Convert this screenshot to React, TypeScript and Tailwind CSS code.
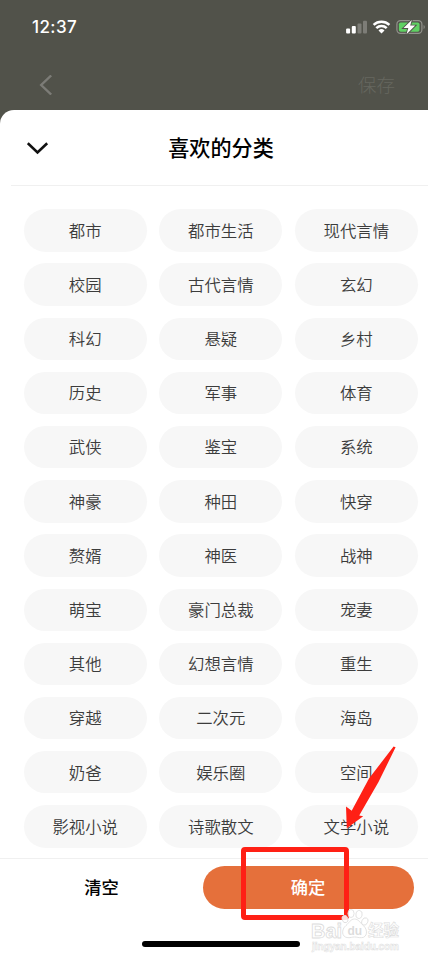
import { useState } from "react";

const categories = [
    "都市", "都市生活", "现代言情",
    "校园", "古代言情", "玄幻",
    "科幻", "悬疑", "乡村",
    "历史", "军事", "体育",
    "武侠", "鉴宝", "系统",
    "神豪", "种田", "快穿",
    "赘婿", "神医", "战神",
    "萌宝", "豪门总裁", "宠妻",
    "其他", "幻想言情", "重生",
    "穿越", "二次元", "海岛",
    "奶爸", "娱乐圈", "空间",
    "影视小说", "诗歌散文", "文学小说",
];

function StatusIcons() {
    return (
        <svg className="h-4 w-[80px]" viewBox="346 19 80 16" fill="none">
            {/* Signal */}
            <rect x="346.1" y="28.5" width="4" height="5" rx="1" fill="#fff" />
            <rect x="351.8" y="26" width="4" height="7.5" rx="1" fill="#fff" />
            <rect x="357.5" y="23.5" width="4" height="10" rx="1" fill="#7d7d77" />
            <rect x="363" y="20.8" width="4" height="12.7" rx="1" fill="#7d7d77" />
            {/* Wifi */}
            <path d="M373.6 24.8a11.6 11.6 0 0 1 15.8 0M376.3 28.2a7.4 7.4 0 0 1 10.4 0" stroke="#fff" strokeWidth="2.5" />
            <path d="M381.5 33.5l-3-3.1a4.3 4.3 0 0 1 6 0z" fill="#fff" />
            {/* Battery */}
            <rect x="396.9" y="20.6" width="25" height="12.8" rx="3.6" stroke="#92928c" strokeWidth="1.2" />
            <path d="M423.6 25v4.2c1.5-.6 1.5-3.6 0-4.2z" fill="#92928c" />
            <rect x="398.9" y="22.4" width="20.6" height="9.4" rx="1.8" fill="#5fd163" />
            <path d="M411.8 20l-8.3 8.1h4.8l-1.8 6.2 8.7-8.7h-5z" fill="#fff" stroke="#51524a" strokeWidth="1.8" paintOrder="stroke" />
        </svg>
    );
}

function Watermark() {
    return (
        <svg className="absolute left-[306px] top-[907px] h-[50px] w-[100px]" viewBox="306 907 100 50">
            <g fill="#fff" fillOpacity="0.85" stroke="#dcdcdc" strokeWidth="0.8">
                <text x="311" y="937.5" fontFamily="Liberation Sans, sans-serif" fontSize="20" fontWeight="700" textLength="31" lengthAdjust="spacingAndGlyphs">Bai</text>
                <ellipse cx="345" cy="919" rx="2.9" ry="3.8" transform="rotate(-18 345 919)" />
                <ellipse cx="351" cy="913.5" rx="3.1" ry="4" />
                <ellipse cx="359" cy="914.5" rx="3.1" ry="4" transform="rotate(12 359 914.5)" />
                <ellipse cx="364.8" cy="921.5" rx="2.9" ry="3.8" transform="rotate(25 364.8 921.5)" />
                <path d="M354.5 919c-4 0-5.5 4-8.5 6.5-5 4-4.5 12 2 12.2 3 .1 4-.7 6.5-.7s4 .8 7 .7c6-.2 6.5-8 2-12-3.5-3-5-6.700-9-6.700z" />
                <text x="347.5" y="935" fontFamily="Liberation Sans, sans-serif" fontSize="12" fontWeight="700" fill="#d6d6d6" stroke="none">du</text>
                <text x="368" y="936" fontFamily="'Noto Sans CJK SC', sans-serif" fontSize="15.5" fontWeight="700" strokeWidth="0.6" textLength="31">经验</text>
                <text x="312" y="949.5" fontFamily="Liberation Sans, sans-serif" fontSize="10" fontWeight="700" strokeWidth="0.5" textLength="87">jingyan.baidu.com</text>
            </g>
        </svg>
    );
}

export default function App() {
    const [selected, setSelected] = useState<string[]>([]);

    const toggleCategory = (name: string) => {
        setSelected(prev => prev.includes(name) ? prev.filter(c => c !== name) : [...prev, name]);
    };

    return (
        <div className="relative flex h-[963px] w-[428px] flex-col overflow-hidden bg-[#51524a] font-['Noto_Sans_CJK_SC',sans-serif]">
            <header className="h-[110px] shrink-0">
                <div className="flex h-[54px] items-center justify-between pl-8 pr-0.5">
                    <span className="pt-0.5 font-['Inter',sans-serif] text-[17px] font-medium tracking-[0.4px] text-white">12:37</span>
                    <StatusIcons />
                </div>
                <div className="flex h-[62px] items-center justify-between pl-[39px] pr-[33px]">
                    <svg className="h-5 w-3.5" viewBox="0 0 14 20" fill="none">
                        <path d="M12.2 .5L2.2 10l10 9.5" stroke="#7c7c77" strokeWidth="2.4" />
                    </svg>
                    <span className="pb-px text-[18.5px] font-light text-[#66675f]">保存</span>
                </div>
            </header>

            <main className="flex w-[442px] grow flex-col rounded-t-[14px] bg-white">
                <div className="ml-[11px] flex h-[76px] shrink-0 items-center border-b border-[#f0f0f0] pl-4">
                    <svg className="h-3.5 w-[22px]" viewBox="0 0 22 14" fill="none">
                        <path d="M.8 2.2l9.7 9.3 9.7-9.3" stroke="#111" strokeWidth="2.6" />
                    </svg>
                    <h1 className="grow pr-[49px] text-center text-[21.1px] font-medium text-black">喜欢的分类</h1>
                </div>

                <div className="grid h-[672px] shrink-0 auto-rows-[42.3px] grid-cols-3 gap-x-[12.3px] gap-y-[11.9px] pl-[23.6px] pr-[24px] pt-[23.3px]">
                    {categories.map(name => (
                        <button
                            key={name}
                            onClick={() => toggleCategory(name)}
                            className={`rounded-full pb-px text-[16.4px] font-[350] ${selected.includes(name)
                                ? "bg-[#fdeee6] text-[#e5703b]"
                                : "bg-[#f7f7f7] text-[#3c3c3c]"
                                }`}
                        >
                            {name}
                        </button>
                    ))}
                </div>

                <footer className="flex grow flex-col border-t border-[#f0f0f0] pt-[7px]">
                    <div className="flex">
                        <button onClick={() => setSelected([])} className="w-[203px] pb-px text-[17.3px] font-medium text-black">
                            清空
                        </button>
                        <button className="h-[43px] w-[211px] rounded-full bg-[#e5703b] pb-px pr-px text-[17.3px] font-medium text-white">
                            确定
                        </button>
                    </div>
                    <div className="mx-auto mt-8 h-1.5 w-[158px] rounded-full bg-black" />
                </footer>
            </main>

            {/* Tap hint over the confirm button */}
            <div className="absolute left-[241px] top-[847px] h-[73px] w-[108px] rounded-[4px] border-[5px] border-[#ff2015]" />
            <svg className="absolute left-[340px] top-[742px] h-[92px] w-[60px]" viewBox="340 742 60 92">
                <path d="M393.600 746.500L369 778.500 351.700 810.700l-5.700-4.200 .8 21.800 16.400-12-4-.8L378.500 782 395.600 747.300z" fill="#ff2015" />
            </svg>
            <Watermark />
        </div>
    );
}
